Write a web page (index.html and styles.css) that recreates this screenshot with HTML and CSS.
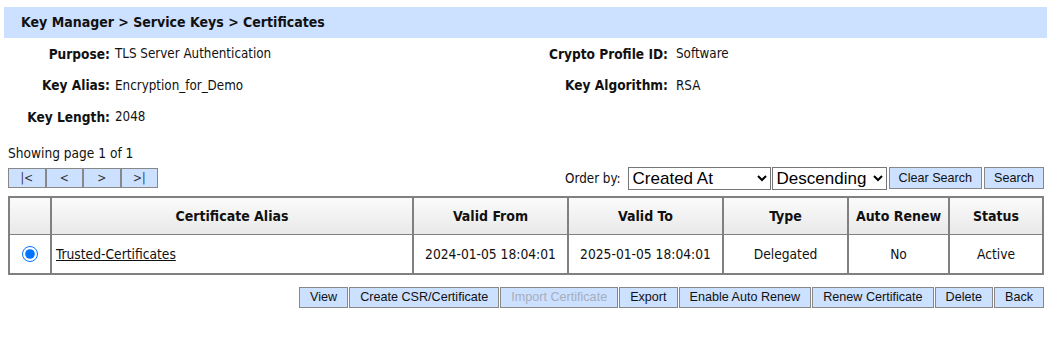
FILE: index.html
```html
<!DOCTYPE html>
<html lang="en">
<head>
  <meta charset="UTF-8">
  <title>Certificates</title>
  <link rel="stylesheet" href="styles.css">
</head>
<body>
  <div class="title-bar">Key Manager &gt; Service Keys &gt; Certificates</div>

  <div class="details">
    <div class="label">Purpose:</div>
    <div class="value">TLS Server Authentication</div>
    <div class="label label-right">Crypto Profile ID:</div>
    <div class="value">Software</div>

    <div class="label">Key Alias:</div>
    <div class="value">Encryption_for_Demo</div>
    <div class="label label-right">Key Algorithm:</div>
    <div class="value">RSA</div>

    <div class="label">Key Length:</div>
    <div class="value">2048</div>
  </div>

  <div class="content">
    <div class="page-info">Showing page 1 of 1</div>

    <div class="toolbar">
      <div class="pager">
        <button class="btn pager-btn">|&lt;</button>
        <button class="btn pager-btn">&lt;</button>
        <button class="btn pager-btn">&gt;</button>
        <button class="btn pager-btn">&gt;|</button>
      </div>
      <div class="search">
        <span class="order-label">Order by:</span>
        <select class="order-select order-field">
          <option>Created At</option>
        </select>
        <select class="order-select order-dir">
          <option>Descending</option>
        </select>
        <button class="btn">Clear Search</button>
        <button class="btn">Search</button>
      </div>
    </div>

    <table class="cert-table">
      <colgroup>
        <col style="width: 42px">
        <col style="width: 362px">
        <col style="width: 155px">
        <col style="width: 155px">
        <col style="width: 125px">
        <col style="width: 101px">
        <col>
      </colgroup>
      <thead>
        <tr>
          <th></th>
          <th>Certificate Alias</th>
          <th>Valid From</th>
          <th>Valid To</th>
          <th>Type</th>
          <th>Auto Renew</th>
          <th>Status</th>
        </tr>
      </thead>
      <tbody>
        <tr>
          <td class="select-cell"><input type="radio" name="cert" checked></td>
          <td class="alias"><a href="#">Trusted-Certificates</a></td>
          <td>2024-01-05 18:04:01</td>
          <td>2025-01-05 18:04:01</td>
          <td>Delegated</td>
          <td>No</td>
          <td>Active</td>
        </tr>
      </tbody>
    </table>

    <div class="actions">
      <button class="btn">View</button>
      <button class="btn">Create CSR/Certificate</button>
      <button class="btn" disabled>Import Certificate</button>
      <button class="btn">Export</button>
      <button class="btn">Enable Auto Renew</button>
      <button class="btn">Renew Certificate</button>
      <button class="btn">Delete</button>
      <button class="btn">Back</button>
    </div>
  </div>
</body>
</html>
```

FILE: styles.css
```css
body {
  margin: 0;
  background-color: white;
  color: #111;
  font-family: 'DejaVu Sans Condensed', 'DejaVu Sans', sans-serif;
  font-size: 13.3px;
}

.title-bar {
  margin: 7px 4px 0;
  height: 31px;
  line-height: 31px;
  padding-left: 17px;
  background-color: #cce0ff;
  font-weight: bold;
  font-size: 14px;
  color: #111;
}

.details {
  display: grid;
  grid-template-columns: 115px 420px 141px 1fr;
  grid-auto-rows: 31.5px;
  align-items: center;
}

.details .label {
  text-align: right;
  padding-right: 5px;
  font-weight: bold;
  font-size: 13.6px;
  white-space: nowrap;
}

.details .label-right {
  padding-right: 8px;
}

.content {
  padding: 0 7px 0 8px;
}

.page-info {
  margin-top: 12px;
  line-height: 16px;
  font-size: 13.6px;
}

.toolbar {
  display: flex;
  justify-content: space-between;
  align-items: flex-start;
  margin-top: 7px;
}

.btn {
  margin: 0;
  height: 21px;
  padding: 0 10px;
  border: 1px solid #888;
  background-color: #cce0ff;
  color: #111;
  font-family: 'Liberation Sans', Arial, sans-serif;
  font-size: 12.6px;
}

.btn:disabled {
  color: #a6aebd;
}

.pager {
  display: flex;
  gap: 0;
}

.pager .pager-btn {
  width: 37.5px;
  height: 20px;
  padding: 0;
  font-family: 'DejaVu Sans Condensed', 'DejaVu Sans', sans-serif;
  font-size: 12px;
  color: #333;
}

.search {
  display: flex;
  align-items: center;
  gap: 2px;
  margin-top: -1px;
}

.order-label {
  margin-right: 5px;
}

.order-select {
  height: 23px;
  margin: 0;
  border: 1px solid #767676;
  border-radius: 0;
  background-color: white;
  color: #000;
  font-family: 'Liberation Sans', Arial, sans-serif;
  font-size: 17px;
}

.order-field {
  width: 143px;
}

.order-dir {
  width: 115px;
  margin-left: -1px;
}

.search .btn {
  height: 22px;
  padding: 0 9px;
}

.cert-table {
  width: 100%;
  margin-top: 6px;
  border-collapse: collapse;
  border: 2px solid #808080;
  table-layout: fixed;
  font-size: 13.7px;
}

.cert-table th,
.cert-table td {
  border-left: 2px solid #808080;
  border-right: 2px solid #808080;
  text-align: center;
  padding: 0 4px;
}

.cert-table th {
  height: 36px;
  border-bottom: 1px solid #808080;
  background: linear-gradient(#fbfbfb, #e9e9e9);
  font-weight: bold;
  font-size: 14px;
}

.cert-table td {
  height: 38px;
}

.cert-table td.alias {
  text-align: left;
}

.alias a {
  color: #111;
}

.select-cell input {
  width: 16px;
  height: 16px;
  margin: 0;
  vertical-align: middle;
  accent-color: #0075ff;
}

.actions {
  display: flex;
  justify-content: flex-end;
  gap: 1px;
  margin-top: 12px;
}

.actions .btn {
  height: 21px;
}
```
